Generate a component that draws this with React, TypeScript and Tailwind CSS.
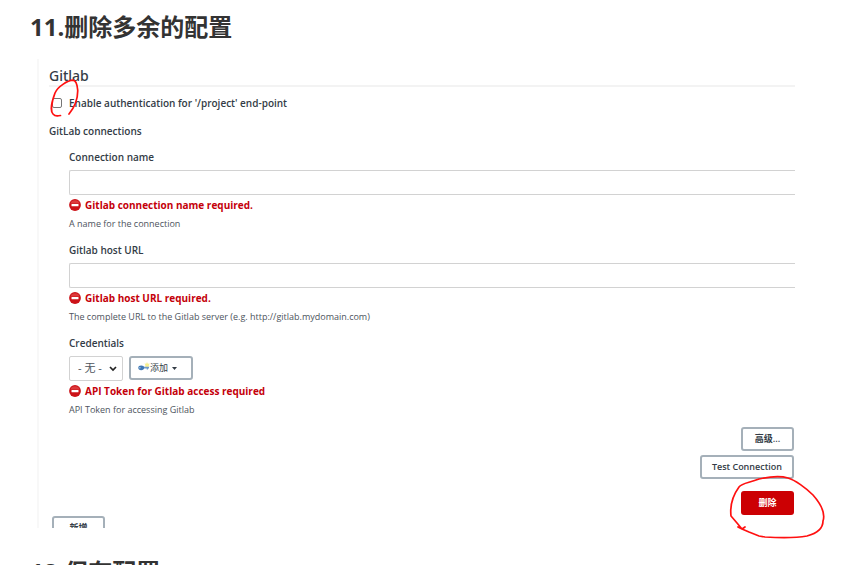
import React, { ReactNode } from 'react';

function ErrorIcon() {
  return (
    <svg className="size-3 shrink-0" viewBox="0 0 12 12" aria-hidden="true">
      <circle cx="6" cy="6" r="5.9" fill="#cc1218" />
      <path d="M1.4 4.5a4.9 4.9 0 0 1 9.2 0z" fill="#dc3a3c" />
      <rect x="2.5" y="5" width="7" height="2.2" rx="0.5" fill="#fff" />
    </svg>
  );
}

function KeyIcon() {
  return (
    <svg className="size-3 shrink-0" viewBox="0 0 12 12" aria-hidden="true">
      <path d="M9 0l.8 1.8 2-.3-1 1.7 1 1.6-2-.2-.8 1.7-.8-1.8-1.7.2 1-1.5-1-1.6 1.8.2z" fill="#f8ef8c" />
      <path d="M5 4.8h6v1.7h-1v1H8.7v-1H5z" fill="#6f9bcb" />
      <ellipse cx="3.2" cy="5.8" rx="2.9" ry="2.4" fill="#3f78b5" />
      <circle cx="1.9" cy="5.8" r="0.7" fill="#bcd3ea" />
    </svg>
  );
}

function FieldStatus({ error, help }: { error: string; help: string }) {
  return (
    <>
      <p className="flex h-5 items-center gap-1 text-[10px] font-bold text-[#c4000a]">
        <ErrorIcon />
        {error}
      </p>
      <p className="flex h-[18px] items-center text-[9px] text-[#4d545d]">{help}</p>
    </>
  );
}

function TextField({ id, label, error, help }: { id: string; label: string; error: string; help: string }) {
  return (
    <div className="mb-[7px]">
      <label htmlFor={id} className="mb-[3px] flex h-5 items-center font-semibold">{label}</label>
      <input
        id={id}
        type="text"
        className="block h-[25px] w-full rounded-l-xs border border-r-0 border-[#d2d2d2] bg-white px-2 outline-none"
      />
      <FieldStatus error={error} help={help} />
    </div>
  );
}

function Button({ children }: { children: ReactNode }) {
  return (
    <button type="button" className="h-6 min-w-[53px] rounded-[3px] border-2 border-[#a5b0b9] bg-white px-2.5 text-[9px] font-semibold text-[#333c46]">
      {children}
    </button>
  );
}

export default function App() {
  return (
    <main className="h-screen overflow-hidden bg-white pl-[30px] font-['Open_Sans','Noto_Sans_CJK_SC',sans-serif] text-[#333]">
      <h2 className="pt-[9px] text-2xl leading-9 font-bold">11.删除多余的配置</h2>

      <section className="mt-3.5 mr-[67px] ml-[7px] border-l-2 border-[#f8f8f8] pt-2 pl-2.5 text-[10px] text-[#333c46]">
        <h3 className="border-b-2 border-[#f3f3f3] font-['Noto_Sans',sans-serif] text-sm leading-[18px] font-medium">Gitlab</h3>

        <div className="relative mt-1.5 flex h-5 items-center pl-[3px]">
          <input
            id="auth"
            type="checkbox"
            className="size-[10px] appearance-none rounded-xs border border-[#767676] bg-white checked:bg-[#0b6aa2]"
          />
          <label htmlFor="auth" className="ml-[7px] font-semibold">Enable authentication for '/project' end-point</label>
          <svg className="pointer-events-none absolute -top-4 left-0 h-10 w-8" viewBox="0 0 32 40" fill="none" aria-hidden="true">
            <path
              d="M20 37C25 31 29 23 28.700 13C28.200 7 27 3.500 24 3.200C19 3.500 9 9 6 16C3 24 1 34 4 37C7 40.500 9 38.500 11.500 38.500"
              stroke="#ff1010"
              strokeWidth="1.7"
              strokeLinecap="round"
            />
          </svg>
        </div>

        <p className="mt-2 flex h-5 items-center font-semibold">GitLab connections</p>

        <form className="mt-1.5 pl-5">
          <TextField id="name" label="Connection name" error="Gitlab connection name required." help="A name for the connection" />
          <TextField
            id="url"
            label="Gitlab host URL"
            error="Gitlab host URL required."
            help="The complete URL to the Gitlab server (e.g. http://gitlab.mydomain.com)"
          />

          <label htmlFor="credentials" className="mb-[3px] flex h-5 items-center font-semibold">Credentials</label>
          <div className="flex items-start gap-1.5">
            <div className="relative">
              <select
                id="credentials"
                className="block h-[25px] w-[54px] appearance-none rounded-xs border border-[#d2d2d2] bg-white pl-2 text-[11px] text-[#4d545d]"
              >
                <option>- 无 -</option>
              </select>
              <svg className="pointer-events-none absolute top-2.5 right-1.5 h-1.5 w-2" viewBox="0 0 8 6" fill="none" aria-hidden="true">
                <path d="M1 1l3 3 3-3" stroke="#222" strokeWidth="1.7" />
              </svg>
            </div>
            <button
              type="button"
              className="flex h-6 w-16 items-center rounded-[3px] border-2 border-[#a5b0b9] bg-white pl-[7px] text-[9px] text-[#333c46]"
            >
              <KeyIcon />
              添加
              <svg className="ml-1 h-[3px] w-[5px]" viewBox="0 0 5 3" aria-hidden="true">
                <path d="M0 0h5L2.5 3z" fill="#333c46" />
              </svg>
            </button>
          </div>
          <FieldStatus error="API Token for Gitlab access required" help="API Token for accessing Gitlab" />

          <div className="mt-2 flex flex-col items-end gap-1 pr-px">
            <Button>高级...</Button>
            <Button>Test Connection</Button>
            <div className="relative mt-2">
              <button type="button" className="block h-6 w-[53px] rounded-[3px] bg-[#cc0003] text-[9px] font-bold text-white">
                删除
              </button>
              <svg
                className="pointer-events-none absolute -top-4 -left-3 h-[66px] w-[98px]"
                viewBox="0 0 98 66"
                fill="none"
                aria-hidden="true"
              >
                <path
                  d="M13 54L20 57L30 61L36 62C52 63 67 63 78 61C89 58 94 53 94 46C97 37 91 28 84 20C77 13 66 5 59 3C49 0 39 2 30 4C20 8 13 8 10 12C2 23 1 32 2 41L8 48L13 54L9 52M13 54L16 52"
                  stroke="#ff1010"
                  strokeWidth="1.7"
                  strokeLinecap="round"
                />
              </svg>
            </div>
          </div>
        </form>

        <div className="ml-[3px] h-[13px] overflow-hidden pt-px">
          <button type="button" className="block h-6 w-[53px] rounded-[3px] border-2 border-[#a5b0b9] bg-white text-[9px] font-semibold">
            新增
          </button>
        </div>
      </section>

      <h2 className="mt-[26px] text-2xl leading-9 font-bold">12.保存配置</h2>
    </main>
  );
}
